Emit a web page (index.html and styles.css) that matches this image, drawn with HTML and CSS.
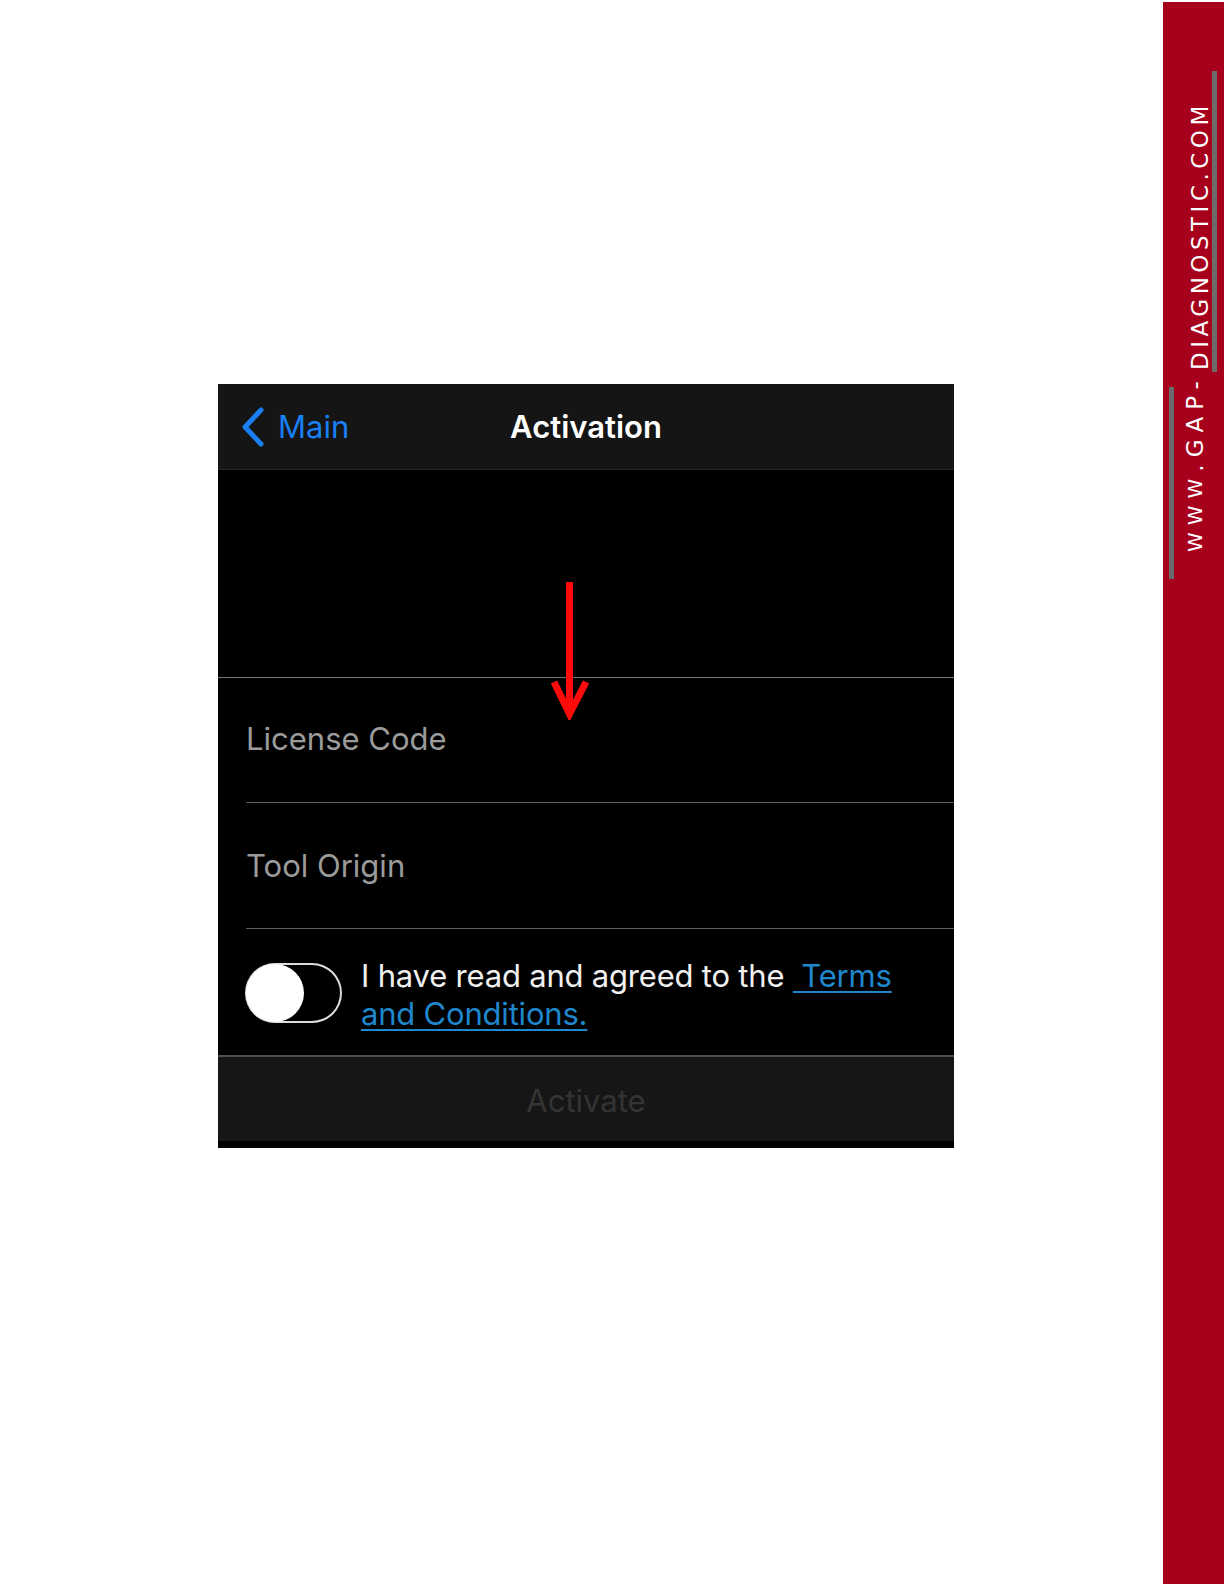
FILE: index.html
```html
<!DOCTYPE html>
<html lang="en">
<head>
<meta charset="utf-8">
<title>Activation</title>
<link rel="stylesheet" href="styles.css">
</head>
<body>
<div class="page">
  <main class="main">
    <div class="phone">
      <header class="nav">
        <div class="back">
          <svg class="chev" width="26" height="42" viewBox="0 0 26 42"><path d="M21 4 L5 21 L21 38" fill="none" stroke="#1a7ff2" stroke-width="5" stroke-linecap="round" stroke-linejoin="round"/></svg>
          <span>Main</span>
        </div>
        <h1 class="title">Activation</h1>
        <div></div>
      </header>
      <div class="spacer"></div>
      <div class="field">License Code</div>
      <div class="field field-2">Tool Origin</div>
      <div class="agree">
        <div class="toggle"><div class="knob"></div></div>
        <p class="agree-text">I have read and agreed to the <a class="link" href="#">&nbsp;Terms<br>and Conditions.</a></p>
      </div>
      <div class="activate">Activate</div>
      <div class="bottom"></div>
      <svg class="arrow" width="42" height="140" viewBox="0 0 42 140"><path d="M20.5 2 V130" stroke="#ff0a0a" stroke-width="7" fill="none"/><path d="M5 102 L20.5 134 L37 102" stroke="#ff0a0a" stroke-width="7" fill="none" stroke-linejoin="miter"/></svg>
    </div>
  </main>
  <aside class="sidebar">
    <div class="logo">
      <span class="seg seg-a"><span class="sm">WWW</span>.GAP-</span>
      <span class="seg seg-b">DIAGNOSTIC.COM</span>
    </div>
  </aside>
</div>
</body>
</html>
```
FILE: styles.css
```css
* { box-sizing: border-box; }
html, body { margin: 0; padding: 0; background: #fff; }
body { width: 1224px; height: 1584px; overflow: hidden; font-family: Inter, "Noto Sans", "Liberation Sans", sans-serif; }
.page { display: flex; height: 1584px; }
.main { flex: 1; padding: 384px 0 0 218px; }
.phone { position: relative; width: 736px; background: #000; }
.nav { display: grid; grid-template-columns: 1fr auto 1fr; align-items: center; height: 86px; background: #151515; border-bottom: 1px solid #262626; padding: 0 22px; }
.back { display: flex; align-items: center; gap: 12px; color: #1a7ff2; font-size: 31px; }
.chev { display: block; }
.title { margin: 0; color: #fff; font-size: 31px; font-weight: 600; }
.spacer { height: 208px; border-bottom: 1px solid #777; }
.field { margin-left: 28px; height: 125px; display: flex; align-items: center; font-size: 31px; color: #9b9b9b; border-bottom: 1px solid #5e5e5e; padding-bottom: 3px; }
.field-2 { height: 126px; padding-bottom: 0; }
.agree { display: flex; align-items: center; gap: 19px; height: 126px; padding-left: 27px; padding-top: 2px; }
.toggle { width: 97px; height: 60px; border-radius: 30px; box-shadow: inset 0 0 0 2px #dcdcdc; display: flex; align-items: center; padding: 1px; flex: none; }
.knob { width: 58px; height: 58px; border-radius: 50%; background: #fff; }
.agree-text { margin: 0; font-size: 31px; line-height: 38px; color: #f0f0f0; letter-spacing: -0.2px; padding-top: 4px; }
.link { color: #1f87cc; text-decoration: underline; text-decoration-thickness: 2px; text-underline-offset: 4px; }
.activate { height: 86px; background: #161616; border-top: 2px solid #4e4e4e; display: flex; align-items: center; justify-content: center; font-size: 31px; color: #343434; padding-top: 2px; }
.bottom { height: 7px; background: #000; }
.arrow { position: absolute; left: 331px; top: 196px; }
.sidebar { width: 61px; margin-top: 2px; background: #a6001c; padding: 69px 0 0 6px; }
.logo { writing-mode: vertical-rl; transform: rotate(180deg); display: flex; inline-size: 508px; block-size: 48px; color: #fff; font-family: "DejaVu Sans", sans-serif; font-size: 23px; line-height: 23px; white-space: nowrap; }
.seg { display: block; }
.seg-a { inline-size: 192px; border-block-start: 5px solid #6b6b6b; padding-inline-start: 27px; padding-block-start: 10px; align-self: flex-start; letter-spacing: 7px; }
.sm { font-size: 20px; }
.seg-b { margin-inline-start: 15px; inline-size: 301px; border-block-end: 5px solid #6b6b6b; padding-inline-start: 2px; align-self: flex-end; letter-spacing: 4.5px; }
```
